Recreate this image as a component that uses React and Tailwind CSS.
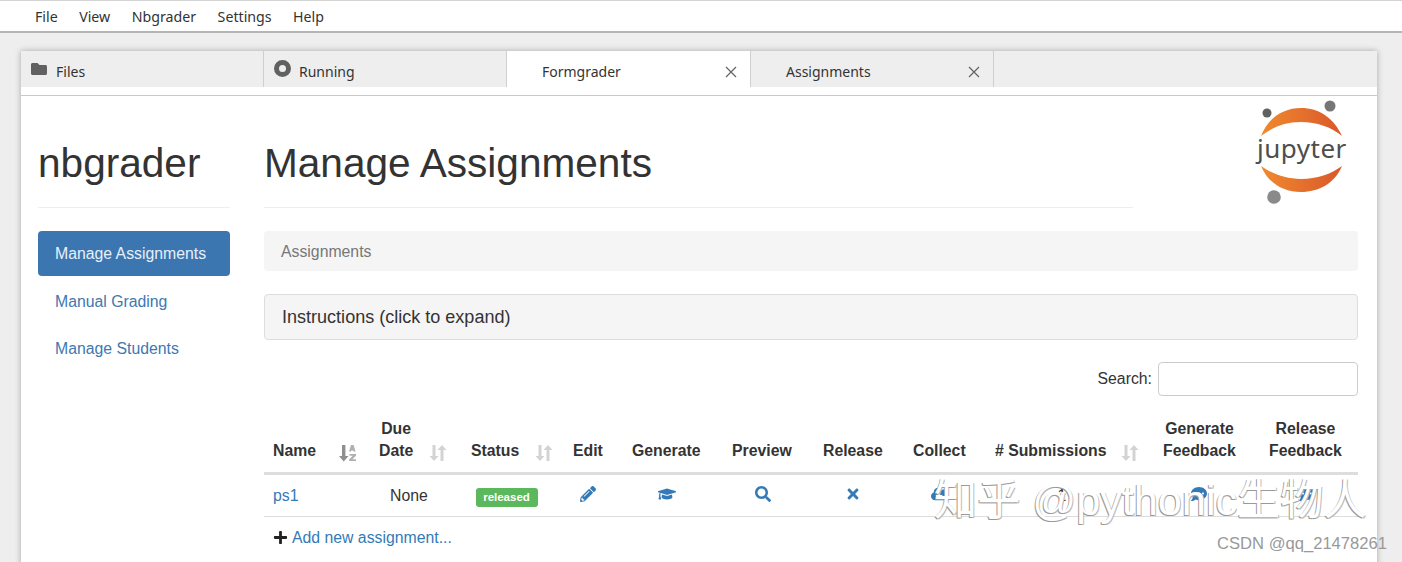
import React from "react";
import { FaPencilAlt, FaGraduationCap, FaSearch, FaTimes, FaPlus, FaFolder, FaCloudDownloadAlt, FaCommentDots } from "react-icons/fa";

const ui = "font-['Noto_Sans',sans-serif]";
const Sort = () => (
  <svg width="18" height="18" viewBox="0 0 18 18" className="text-[#d3d3d3] fill-current shrink-0">
    <path d="M3.500 1h3v11h3l-4.500 5-4.500-5h3z" />
    <path d="M11.500 17h3V6h3l-4.500-5-4.500 5h3z" />
  </svg>
);
const SortAlpha = () => (
  <svg width="18" height="18" viewBox="0 0 18 18" className="text-[#8f8f8f] fill-current shrink-0">
    <path d="M3 1h3.400v11H9.500l-4.800 5.500L0 12h3z" />
    <path d="M12 1h2.600l2 6.500h-2l-.3-1h-2l-.3 1h-2zM10.500 10h6.500v1.800l-3.600 3.500H17V17h-6.800v-1.800l3.600-3.500h-3.300z" opacity="0.7" />
  </svg>
);
const Close = () => (
  <svg width="12" height="12" viewBox="0 0 12 12" className="ml-auto mr-[13px] text-[#666] stroke-current shrink-0">
    <path d="M1 1l10 10M11 1L1 11" strokeWidth="1.300" fill="none" />
  </svg>
);

function Head({ lines, sort, w, pr = "pr-[6px]" }) {
  return (
    <th style={{ width: w }} className="align-bottom text-left font-bold px-[9px] pb-[10px] pt-0">
      <div className={`flex items-end justify-between ${pr}`}>
        <span className="leading-[22px] text-center">
          {lines.map((l) => <div key={l}>{l}</div>)}
        </span>
        {sort}
      </div>
    </th>
  );
}

function Tab({ label, icon, active, close, w }) {
  return (
    <div className={`h-[36px] flex items-center border-r border-[#cfcfcf] text-[14px] text-[#333] pt-[5px] ${active ? "bg-white" : ""} ${w}`}>
      {icon}
      <span className={icon ? "" : "ml-[35px]"}>{label}</span>
      {close && <Close />}
    </div>
  );
}

const Logo = () => (
  <svg width="100" height="112" viewBox="0 0 100 112" className="shrink-0">
    <circle cx="18" cy="17" r="4.500" fill="#616161" />
    <circle cx="81" cy="10" r="5.500" fill="#767677" />
    <circle cx="25" cy="101" r="6.800" fill="#8a8a8b" />
    <defs>
      <linearGradient id="g" x1="0" x2="1"><stop offset="0" stopColor="#f08a2e" /><stop offset="1" stopColor="#d9582b" /></linearGradient>
    </defs>
    <path d="M12 40C19 22 34 12 52 12s33 10 41 28C82 31 68 26 52 26S24 31 12 40z" fill="url(#g)" />
    <path d="M12 70c7 17 22 26 40 26s34-9 41-26C82 78 68 83 52 83S24 78 12 70z" fill="url(#g)" />
    <text x="8" y="62" fontSize="26" fill="#4e4e4e" fontFamily="'Noto Sans',sans-serif" letterSpacing="0.500">jupyter</text>
  </svg>
);

export default function App() {
  const icon = "mx-auto text-[#337ab7]";
  return (
    <div className="relative w-[1402px] h-[562px] overflow-hidden bg-[#eeeeee] font-['Liberation_Sans',sans-serif] text-[#333]">
      <div className={`h-[33px] bg-white border-t border-[#d4d4d4] border-b-2 border-b-[#b5b5b5] flex items-center gap-[21.500px] pl-[35px] pt-[1px] text-[14.200px] ${ui}`}>
        <span>File</span><span>View</span><span>Nbgrader</span><span>Settings</span><span>Help</span>
      </div>
      <div className="ml-[21px] mr-[25px] mt-[18px] bg-white shadow-[0_0_6px_rgba(0,0,0,0.3)] h-[600px]">
        <div className={`h-[36px] flex bg-[#eeeeee] ${ui}`}>
          <Tab w="w-[243px]" label="Files" icon={<FaFolder className="ml-[10px] mr-[9px] mb-[6px] text-[#616161]" size={16} />} />
          <Tab w="w-[243px]" label="Running" icon={<span className="ml-[10px] mr-[8px] mb-[6px] w-[17px] h-[17px] rounded-full border-[5px] border-[#616161]" />} />
          <Tab w="w-[244px]" label="Formgrader" active close />
          <Tab w="w-[243px]" label="Assignments" close />
        </div>
        <div className="h-[9px] border-b border-[#c8c8c8]" />
        <div className="flex pl-[17px] pr-[19px]">
          <aside className="w-[192px] shrink-0 text-[15.800px]">
            <h1 className="h-[112px] pt-[39px] text-[40.600px] leading-[56px] border-b border-[#eeeeee]">nbgrader</h1>
            <nav className="mt-[23px] flex flex-col gap-[2px] text-[#4078b0]">
              <div className="h-[45px] leading-[45px] px-[17px] rounded-[4px] bg-[#3c76b0] text-[#e6f0fa]">Manage Assignments</div>
              <div className="h-[46px] leading-[47px] px-[17px]">Manual Grading</div>
              <div className="h-[46px] leading-[46px] px-[17px]">Manage Students</div>
            </nav>
          </aside>
          <main className="ml-[34px] flex-1 min-w-0 text-[15.800px]">
            <div className="flex h-[112px]">
              <h1 className="flex-1 pt-[39px] text-[40.600px] leading-[56px] border-b border-[#eeeeee]">Manage Assignments</h1>
              <div className="w-[225px] pl-[116px]"><Logo /></div>
            </div>
            <div className="mt-[23px] h-[40px] leading-[41px] bg-[#f5f5f5] rounded-[4px] px-[17px] text-[#777]">Assignments</div>
            <div className="mt-[23px] h-[46px] leading-[44px] bg-[#f5f5f5] border border-[#dddddd] rounded-[4px] px-[17px] text-[18.050px]">Instructions (click to expand)</div>
            <div className="mt-[22px] h-[34px] flex items-center justify-end gap-[6px]">
              <span>Search:</span>
              <div className="w-[200px] h-[34px] bg-white border border-[#cccccc] rounded-[4px]" />
            </div>
            <table className="mt-[22px] table-fixed w-full border-collapse">
              <thead>
                <tr className="border-b-[3px] border-[#dddddd]">
                  <Head w="106px" pr="pr-[4px]" lines={["Name"]} sort={<SortAlpha />} />
                  <Head w="92px" lines={["Due", "Date"]} sort={<Sort />} />
                  <Head w="102px" pr="pr-[2px]" lines={["Status"]} sort={<Sort />} />
                  <Head w="59px" lines={["Edit"]} />
                  <Head w="100px" lines={["Generate"]} />
                  <Head w="91px" lines={["Preview"]} />
                  <Head w="90px" lines={["Release"]} />
                  <Head w="82px" lines={["Collect"]} />
                  <Head w="168px" lines={["# Submissions"]} sort={<Sort />} />
                  <Head w="106px" lines={["Generate", "Feedback"]} />
                  <Head w="98px" lines={["Release", "Feedback"]} />
                </tr>
              </thead>
              <tbody>
                <tr className="h-[43px] border-b border-[#dddddd] text-center">
                  <td className="text-left px-[9px] text-[#337ab7]">ps1</td>
                  <td className="pr-[14px]">None</td>
                  <td className="pr-[13px]"><span className="inline-block h-[19px] w-[62px] leading-[19px] rounded-[3px] bg-[#5cb85c] text-white text-[11.500px] font-bold">released</span></td>
                  <td className="pb-[3px] pr-[12px]"><FaPencilAlt className={icon} size={16} /></td>
                  <td className="pb-[3px] pr-[12px]"><FaGraduationCap className={icon} size={18} /></td>
                  <td className="pb-[3px] pr-[12px]"><FaSearch className={icon} size={16} /></td>
                  <td className="pb-[3px] pr-[12px]"><FaTimes className={icon} size={16} /></td>
                  <td className="pb-[3px] pr-[10px]"><FaCloudDownloadAlt className={icon} size={18} /></td>
                  <td className="text-[#333] pr-[16px]">1</td>
                  <td className="pb-[3px] pr-[16px]"><FaCommentDots className={icon} size={16} /></td>
                  <td className="pb-[3px] pr-[4px]"><FaCommentDots className={icon} size={16} /></td>
                </tr>
              </tbody>
            </table>
            <div className="mt-[9px] pl-[9px] flex items-center gap-[4px] text-[#337ab7]">
              <FaPlus className="text-[#222]" size={15} />
              <span>Add new assignment...</span>
            </div>
          </main>
        </div>
      </div>
      <div className="absolute left-[934px] top-[472px] text-[43.200px] leading-[56px] whitespace-nowrap font-['Liberation_Sans','Noto_Sans_CJK_SC',sans-serif] text-white [text-shadow:-1px_1px_0_#999,1px_1px_0_#bbb]">知乎 @pythonic生物人</div>
      <div className="absolute left-[1217px] top-[535px] text-[16.600px] leading-[18px] text-[#999]">CSDN @qq_21478261</div>
    </div>
  );
}
